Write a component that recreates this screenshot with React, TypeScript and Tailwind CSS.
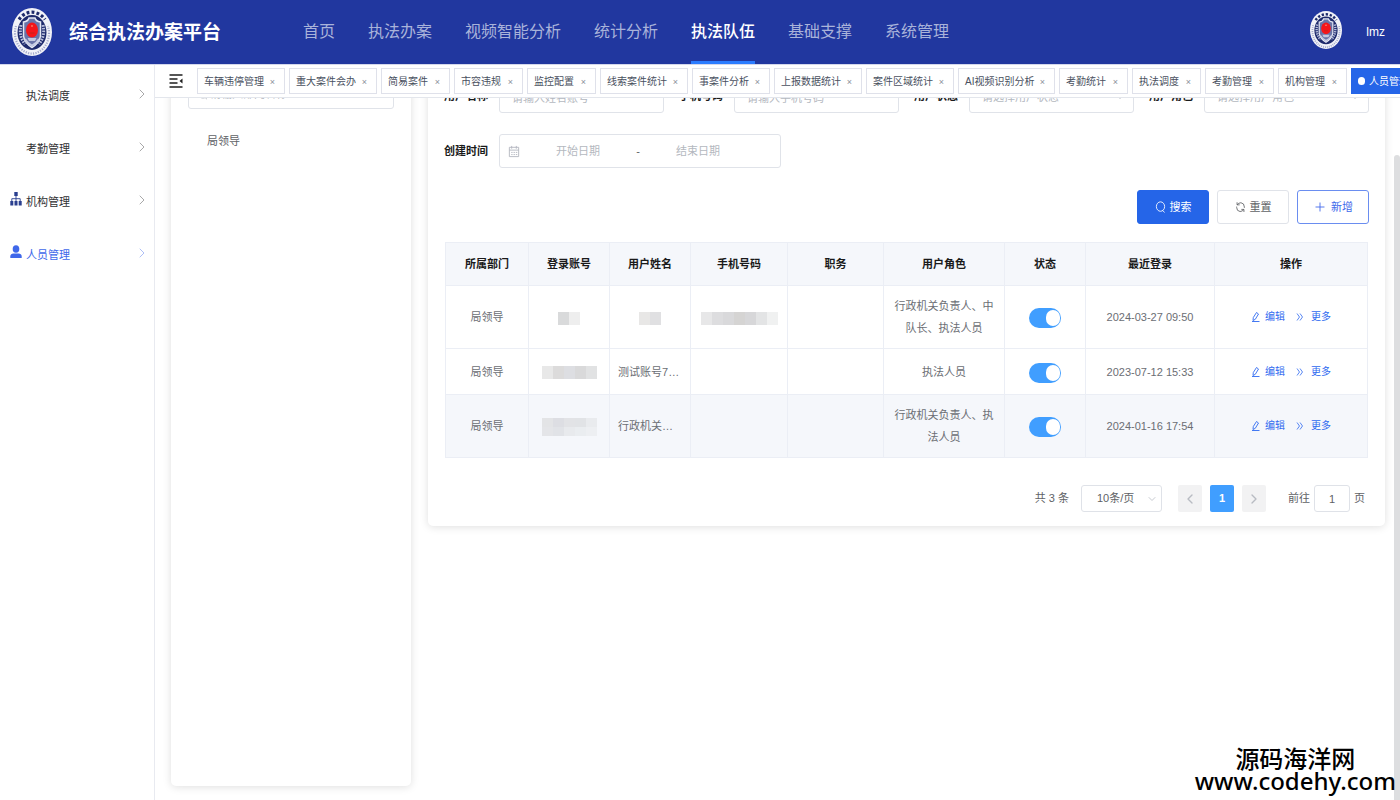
import { ChevronDown, ChevronLeft, ChevronRight, Plus } from "lucide-react";
import type { ReactNode } from "react";

const navItems = ["首页", "执法办案", "视频智能分析", "统计分析", "执法队伍", "基础支撑", "系统管理"];
const activeNav = "执法队伍";

const tabs = [
  { title: "车辆违停管理", width: "w-[88px]" },
  { title: "重大案件会办", width: "w-[88px]" },
  { title: "简易案件", width: "w-[69px]" },
  { title: "市容违规", width: "w-[69px]" },
  { title: "监控配置", width: "w-[69px]" },
  { title: "线索案件统计", width: "w-[88px]" },
  { title: "事案件分析", width: "w-[78px]" },
  { title: "上报数据统计", width: "w-[88px]" },
  { title: "案件区域统计", width: "w-[88px]" },
  { title: "AI视频识别分析", width: "w-[97px]" },
  { title: "考勤统计", width: "w-[69px]" },
  { title: "执法调度", width: "w-[69px]" },
  { title: "考勤管理", width: "w-[69px]" },
  { title: "机构管理", width: "w-[69px]" },
];

type Mosaic = string[][];

interface Row {
  account: Mosaic;
  name: string | Mosaic;
  phone: Mosaic;
  role: string;
  lastLogin: string;
  hovered?: boolean;
}

const rows: Row[] = [
  {
    account: [["#d9dadb", "#eeeeee"]],
    name: [["#e8e7e6", "#e0e0e2"]],
    phone: [["#e7e7e8", "#dddddf", "#d9d9db", "#d5d4d3", "#d7d7d9", "#e3e4e5", "#f0f1f1"]],
    role: "行政机关负责人、中队长、执法人员",
    lastLogin: "2024-03-27 09:50",
  },
  {
    account: [["#e8e8e8", "#dcdbdb", "#dddee2", "#d9d9da", "#e1e2e3"]],
    name: "测试账号7890",
    phone: [],
    role: "执法人员",
    lastLogin: "2023-07-12 15:33",
  },
  {
    account: [
      ["#e3e4e6", "#dddee3", "#e2e3e6", "#e1e3e6", "#e9ebee"],
      ["#e4e5e8", "#e1e3e7", "#e8eaed", "#eaedf0", "#edeff2"],
    ],
    name: "行政机关负责人",
    phone: [],
    role: "行政机关负责人、执法人员",
    lastLogin: "2024-01-16 17:54",
    hovered: true,
  },
];

function Emblem({ className }: { className: string }) {
  return (
    <svg viewBox="0 0 40 48" preserveAspectRatio="none" className={className} aria-hidden="true">
      <ellipse cx="20" cy="24" rx="20" ry="24" fill="#f1f2f8" />
      <path d="M4 18 A17 20.6 0 1 0 36 18" fill="none" stroke="#a3a9cb" strokeWidth="2.2" strokeDasharray="1.2 1.3" />
      <path d="M7 11.500 A17 20.6 0 0 1 33 11.500" fill="none" stroke="#1d2a6b" strokeWidth="3.2" strokeDasharray="2.8 2.2" />
      <ellipse cx="20" cy="24.5" rx="14.500" ry="17.500" fill="#1e2a6c" />
      <path d="M9 17 Q6.500 28 13 36 M31 17 Q33.500 28 27 36" fill="none" stroke="#b9bfdc" strokeWidth="3" strokeDasharray="1.600 1.200" />
      <path
        d="M11.500 14 Q16 13.500 17 10 H23 Q24 13.500 28.500 14 V28 Q27.500 35 20 39.500 Q12.500 35 11.500 28 Z"
        fill="#6a74a8"
        stroke="#e6e9f4"
        strokeWidth="1.500"
      />
      <path d="M13 31 Q15 35 20 37.500 Q25 35 27 31" fill="none" stroke="#c8cde4" strokeWidth="1.800" />
      <ellipse cx="20" cy="22" rx="6" ry="7.500" fill="#f5161a" />
      <path d="M17.500 25 H22.500" stroke="#b8241c" strokeWidth="0.8" />
      <path d="M15.500 30 H24.500 L23 33 H17 Z" fill="#c3c8df" />
      <circle cx="20" cy="18" r="0.8" fill="#ffb890" />
    </svg>
  );
}

function SearchIcon({ className }: { className: string }) {
  return (
    <svg viewBox="0 0 12 14" fill="none" stroke="currentColor" className={className} aria-hidden="true">
      <ellipse cx="6" cy="6.500" rx="4.800" ry="5.500" />
      <path d="M8.500 11.200 L10.500 13" strokeLinecap="round" />
    </svg>
  );
}

function RefreshIcon({ className }: { className: string }) {
  return (
    <svg viewBox="0 0 12 14" fill="none" stroke="currentColor" className={className} aria-hidden="true">
      <path d="M2 4.500 Q4 2 6.500 2 Q10.500 2.500 10.500 7 V8 M2 1.500 V4.500 H5" />
      <path d="M10 9.800 Q8 12.300 5.500 12.300 Q1.500 11.800 1.500 7.500 V6.500 M10 12.800 V9.800 H7" />
    </svg>
  );
}

function EditIcon() {
  return (
    <svg viewBox="0 0 10 12" fill="none" stroke="currentColor" className="h-3 w-[10px]" aria-hidden="true">
      <path d="M2 9.500 L2.300 6.500 L5.500 1.500 L7.500 3 L4.300 8.300 Z" strokeWidth="0.9" />
      <path d="M1 10.500 H8.500" strokeWidth="0.9" />
    </svg>
  );
}

function MoreIcon() {
  return (
    <svg viewBox="0 0 10 12" fill="none" stroke="currentColor" className="h-3 w-[10px]" aria-hidden="true">
      <path d="M2 2.500 L4.500 6 L2 9.500 M5 2.500 L7.500 6 L5 9.500" strokeWidth="0.8" />
    </svg>
  );
}

function CalendarIcon() {
  return (
    <svg viewBox="0 0 12 14" fill="none" stroke="currentColor" className="h-[13px] w-3 shrink-0" aria-hidden="true">
      <path d="M1 2.500 H11 V12.500 H1 Z M1 5.500 H11 M3.500 1 V4 M8.500 1 V4" />
      <path d="M3 8 H9.500 M3 10.300 H9.500" strokeDasharray="1.500 1" />
    </svg>
  );
}

function FoldIcon() {
  return (
    <svg viewBox="0 0 14 14" fill="none" stroke="#1f1f1f" className="h-[14px] w-[14px]" aria-hidden="true">
      <path d="M0.500 1 H13.500 M0.500 5 H8.500 M0.500 9 H8.500 M0.500 13 H13.500" strokeWidth="1.500" />
      <path d="M13.500 4.500 V9.500 L10.500 7 Z" fill="#1f1f1f" stroke="none" />
    </svg>
  );
}

function OrgIcon() {
  return (
    <svg viewBox="0 0 12 14" className="h-[14px] w-3" fill="#2a3f8f" aria-hidden="true">
      <rect x="4.300" y="0" width="3.400" height="4" />
      <rect x="0.300" y="9" width="3" height="4.500" />
      <rect x="4.500" y="9" width="3" height="4.500" />
      <rect x="8.700" y="9" width="3" height="4.500" />
      <path d="M1.800 9 V6.700 H10.200 V9 M6 4 V9" fill="none" stroke="#2a3f8f" strokeWidth="0.9" />
    </svg>
  );
}

function UserIcon() {
  return (
    <svg viewBox="0 0 12 14" className="h-[14px] w-3" fill="#4068ea" aria-hidden="true">
      <ellipse cx="6" cy="4" rx="3.300" ry="3.800" />
      <path d="M0.300 13 V11.500 Q0.300 8.500 3.500 8.500 H8.500 Q11.700 8.500 11.700 11.500 V13 Z" />
    </svg>
  );
}

const menus: { title: string; icon?: ReactNode; active?: boolean }[] = [
  { title: "执法调度" },
  { title: "考勤管理" },
  { title: "机构管理", icon: <OrgIcon /> },
  { title: "人员管理", icon: <UserIcon />, active: true },
];

function Blocks({ data }: { data: Mosaic }) {
  return (
    <div className="flex flex-col items-center pt-[2px]">
      {data.map((line, i) => (
        <div key={i} className="flex">
          {line.map((color, j) => (
            <span
              key={j}
              className={data.length > 1 ? "h-[9px] w-[11px]" : "h-[13px] w-[11px]"}
              style={{ backgroundColor: color }}
            />
          ))}
        </div>
      ))}
    </div>
  );
}

const labelClass = "w-[46px] shrink-0 text-[11px] font-bold text-[#1a1a1a]";
const fieldClass =
  "h-[34px] w-full min-w-0 appearance-none rounded-[3px] border border-[#e0e3e9] bg-white px-3 text-[11px] outline-none placeholder:text-[#b4b8c0]";

function TextField({ id, label, placeholder }: { id: string; label: string; placeholder: string }) {
  return (
    <div className="flex items-center gap-[9px]">
      <label htmlFor={id} className={labelClass}>
        {label}
      </label>
      <input id={id} type="text" placeholder={placeholder} className={`${fieldClass} pt-[3px]`} />
    </div>
  );
}

function SelectField({ id, label, placeholder }: { id: string; label: string; placeholder: string }) {
  return (
    <div className="flex items-center gap-[9px]">
      <label htmlFor={id} className={labelClass}>
        {label}
      </label>
      <div className="relative min-w-0 flex-1">
        <select id={id} className={`${fieldClass} pt-[3px] text-[#b4b8c0]`}>
          <option>{placeholder}</option>
        </select>
        <ChevronDown className="pointer-events-none absolute top-3 right-2 h-3 w-3 text-[#b4b8c0]" />
      </div>
    </div>
  );
}

function Header() {
  return (
    <header className="flex h-[65px] shrink-0 items-center border-b border-[#d3d7ec] bg-[#21379f] pr-[15px] pl-3 text-white">
      <Emblem className="h-12 w-10 shrink-0" />
      <h1 className="ml-[17px] w-[234px] shrink-0 pt-[2px] text-[19px] font-bold">综合执法办案平台</h1>
      <nav className="flex h-full flex-1 gap-[33px]">
        {navItems.map((item) => (
          <a
            key={item}
            href="#"
            className={
              item === activeNav
                ? "flex items-center border-b-[3px] border-[#2b7cff] pt-[2px] text-base font-medium whitespace-nowrap"
                : "flex items-center border-b-[3px] border-transparent pt-[2px] text-base whitespace-nowrap text-[#a9b3da]"
            }
          >
            {item}
          </a>
        ))}
      </nav>
      <Emblem className="mb-1 h-[38px] w-8 shrink-0" />
      <span className="ml-6 text-xs">lmz</span>
    </header>
  );
}

function Sidebar() {
  return (
    <aside className="w-[155px] shrink-0 border-r border-[#e8eaf0] pt-[3px]">
      {menus.map((menu) => (
        <a
          key={menu.title}
          href="#"
          className={
            menu.active
              ? "flex h-[53px] items-center pr-1 pl-[10px] text-[#4068ea]"
              : "flex h-[53px] items-center pr-1 pl-[10px] text-[#303133]"
          }
        >
          <span className="w-4 pb-1">{menu.icon}</span>
          <span className="flex-1 pt-[3px] text-[11px]">{menu.title}</span>
          <ChevronRight className="mb-[2px] h-4 w-4 opacity-50" strokeWidth={1.25} />
        </a>
      ))}
    </aside>
  );
}

function TabsBar() {
  return (
    <div className="flex h-[33px] shrink-0 items-center gap-1 overflow-hidden border-b border-[#e3e6ec] pl-[14px]">
      <button type="button" aria-label="折叠菜单" className="mr-[10px] shrink-0">
        <FoldIcon />
      </button>
      {tabs.map((tab) => (
        <div
          key={tab.title}
          className={`${tab.width} flex h-[26px] shrink-0 items-center justify-between border border-[#dfe1ea] pr-[9px] pl-[6px] text-[10px] whitespace-nowrap text-[#495060]`}
        >
          <a href="#">{tab.title}</a>
          <button type="button" aria-label={`关闭${tab.title}`} className="pt-[3px] text-[9px] text-[#8b909a]">
            ×
          </button>
        </div>
      ))}
      <div className="flex h-[26px] w-[84px] shrink-0 items-center gap-1 bg-[#2565e8] pl-[7px] text-[10px] text-white">
        <span className="h-2 w-[7px] rounded-full bg-white" />
        <a href="#">人员管理</a>
      </div>
    </div>
  );
}

function UserTable() {
  const cell = "border border-[#ebeef5] px-2 py-[9px]";
  return (
    <div className="mt-[18px] px-px">
      <table className="w-full table-fixed border-collapse text-center text-[11px] leading-[22px] text-[#6b6e74]">
        <colgroup>
          <col className="w-[83px]" />
          <col className="w-[81px]" />
          <col className="w-[81px]" />
          <col className="w-[97px]" />
          <col className="w-[96px]" />
          <col className="w-[121px]" />
          <col className="w-[81px]" />
          <col className="w-[129px]" />
          <col />
        </colgroup>
        <thead>
          <tr className="h-[43px] bg-[#f5f7fb] text-[#1a1a1a]">
            {["所属部门", "登录账号", "用户姓名", "手机号码", "职务", "用户角色", "状态", "最近登录", "操作"].map((title) => (
              <th key={title} className="border border-[#ebeef5] font-bold">
                {title}
              </th>
            ))}
          </tr>
        </thead>
        <tbody>
          {rows.map((row) => (
            <tr key={row.lastLogin} className={row.hovered ? "h-[46px] bg-[#f5f7fb]" : "h-[46px]"}>
              <td className={cell}>局领导</td>
              <td className={cell}>
                <Blocks data={row.account} />
              </td>
              <td className={`${cell} truncate`}>
                {typeof row.name === "string" ? row.name : <Blocks data={row.name} />}
              </td>
              <td className={cell}>
                <Blocks data={row.phone} />
              </td>
              <td className={cell}></td>
              <td className={cell}>{row.role}</td>
              <td className={`${cell} pt-[11px]`}>
                <input
                  type="checkbox"
                  role="switch"
                  defaultChecked
                  aria-label="状态"
                  className="relative mx-auto block h-5 w-8 appearance-none rounded-full bg-[#409eff] before:absolute before:top-[2px] before:right-px before:h-4 before:w-[14px] before:rounded-full before:bg-white"
                />
              </td>
              <td className={cell}>{row.lastLogin}</td>
              <td className={cell}>
                <div className="flex items-center justify-center gap-[10px] text-[10px] text-[#2f6af0]">
                  <button type="button" className="flex items-center gap-1">
                    <EditIcon />
                    编辑
                  </button>
                  <button type="button" className="flex items-center gap-[6px]">
                    <MoreIcon />
                    更多
                  </button>
                </div>
              </td>
            </tr>
          ))}
        </tbody>
      </table>
    </div>
  );
}

function Pagination() {
  return (
    <div className="mt-[27px] flex items-center justify-end pr-1 text-[11px] text-[#606266]">
      <span>共 3 条</span>
      <div className="relative ml-3">
        <select
          aria-label="每页条数"
          className="h-[27px] w-[81px] appearance-none rounded-[3px] border border-[#dfe2e8] bg-white pl-[15px] text-[11px] outline-none"
        >
          <option>10条/页</option>
        </select>
        <ChevronDown className="pointer-events-none absolute top-2 right-1 h-3 w-3 text-[#b4b8c0]" strokeWidth={1.5} />
      </div>
      <div className="ml-4 flex gap-2">
        <button type="button" aria-label="上一页" className="flex h-[27px] w-6 items-center justify-center rounded-xs bg-[#f2f2f3] text-[#b8bbc2]">
          <ChevronLeft className="h-4 w-4" />
        </button>
        <button type="button" className="h-[27px] w-6 rounded-xs bg-[#409eff] font-bold text-white">
          1
        </button>
        <button type="button" aria-label="下一页" className="flex h-[27px] w-6 items-center justify-center rounded-xs bg-[#f2f2f3] text-[#b8bbc2]">
          <ChevronRight className="h-4 w-4" />
        </button>
      </div>
      <label htmlFor="page" className="ml-[22px]">
        前往
      </label>
      <input
        id="page"
        type="text"
        defaultValue="1"
        className="mx-1 h-[27px] w-9 rounded-[3px] border border-[#dfe2e8] text-center outline-none"
      />
      <span>页</span>
    </div>
  );
}

export default function App() {
  const button = "flex h-[34px] w-[72px] items-center justify-center gap-1 rounded-[3px] border text-[11px]";
  return (
    <div className="relative flex h-screen flex-col overflow-hidden bg-white font-['Liberation_Sans','Noto_Sans_CJK_SC',sans-serif]">
      <Header />
      <div className="flex min-h-0 flex-1">
        <Sidebar />
        <div className="flex min-w-0 flex-1 flex-col">
          <TabsBar />

          {/* Scrolled content */}
          <main className="flex min-h-0 flex-1 flex-col overflow-hidden">
            <div className="-mt-[35px] flex min-h-0 flex-1 items-start gap-[17px] pr-[15px] pb-[14px] pl-4">
              <section className="w-60 shrink-0 self-stretch rounded-[5px] px-[17px] pt-3 shadow-[0_1px_9px_rgba(0,0,0,0.13)]">
                <div className="flex h-[34px] items-center gap-[2px] rounded-[3px] border border-[#e0e3e9] pt-1 pl-[9px] text-[#b4b8c0]">
                  <SearchIcon className="h-3 w-[10px]" />
                  <input
                    type="text"
                    aria-label="部门名称"
                    placeholder="请输入部门名称"
                    className="min-w-0 flex-1 text-[11px] outline-none placeholder:text-[#b4b8c0]"
                  />
                </div>
                <p className="mt-[21px] pl-[19px] text-[11px] leading-[22px] text-[#606266]">局领导</p>
              </section>

              <section className="min-w-0 flex-1 rounded-[5px] p-4 pb-[14px] shadow-[0_1px_9px_rgba(0,0,0,0.13)]">
                <form>
                  <div className="grid grid-cols-4 gap-x-[15px]">
                    <TextField id="name" label="用户名称" placeholder="请输入姓名账号" />
                    <TextField id="phone" label="手机号码" placeholder="请输入手机号码" />
                    <SelectField id="status" label="用户状态" placeholder="请选择用户状态" />
                    <SelectField id="role" label="用户角色" placeholder="请选择用户角色" />
                  </div>
                  <div className="mt-[21px] flex items-center gap-[9px]">
                    <label htmlFor="start" className={labelClass}>
                      创建时间
                    </label>
                    <div className="flex h-[34px] w-[282px] items-center rounded-[3px] border border-[#e0e3e9] pr-6 pl-2 text-[11px] text-[#b4b8c0]">
                      <CalendarIcon />
                      <input
                        id="start"
                        type="text"
                        placeholder="开始日期"
                        className="w-0 min-w-0 flex-1 text-center outline-none placeholder:text-[#b4b8c0]"
                      />
                      <span className="text-[#606266]">-</span>
                      <input
                        type="text"
                        aria-label="结束日期"
                        placeholder="结束日期"
                        className="w-0 min-w-0 flex-1 text-center outline-none placeholder:text-[#b4b8c0]"
                      />
                    </div>
                  </div>
                  <div className="mt-[22px] flex justify-end gap-2">
                    <button type="button" className={`${button} border-[#2565e8] bg-[#2565e8] text-white`}>
                      <SearchIcon className="h-3 w-[11px]" />
                      搜索
                    </button>
                    <button type="button" className={`${button} border-[#e0e3e9] text-[#606266]`}>
                      <RefreshIcon className="h-3 w-[11px]" />
                      重置
                    </button>
                    <button type="button" className={`${button} border-[#6a8df0] text-[#4068ea]`}>
                      <Plus className="h-[14px] w-[14px]" strokeWidth={1.5} />
                      新增
                    </button>
                  </div>
                </form>
                <UserTable />
                <Pagination />
              </section>
            </div>
          </main>
        </div>
      </div>

      {/* Scrollbar thumb */}
      <div className="absolute top-[155px] right-0 bottom-0 w-[6px] rounded-t-full bg-[#dddee0]" />

      {/* Watermark */}
      <div className="absolute right-1 bottom-2 text-center font-['Noto_Sans','Noto_Sans_CJK_SC',sans-serif] text-2xl leading-[22px] font-medium text-black">
        <p>源码海洋网</p>
        <p>www.codehy.com</p>
      </div>
    </div>
  );
}
